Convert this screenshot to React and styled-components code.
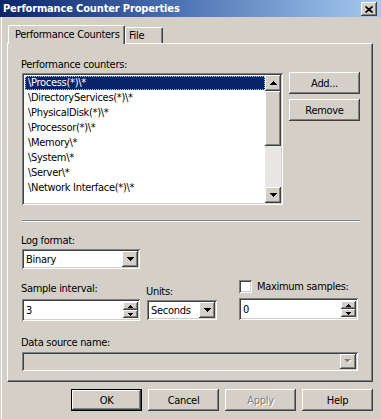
import React from 'react';
import styled, { createGlobalStyle, css } from 'styled-components';

const Global = createGlobalStyle`
  html, body { margin: 0; padding: 0; background: #d4d0c8; }
  body {
    font-family: "DejaVu Sans Condensed", "DejaVu Sans", "Liberation Sans", sans-serif;
    font-size: 11px;
    letter-spacing: -0.3px;
    color: #000;
  }
  * { box-sizing: border-box; }
`;

const bevelRaised = css`
  box-shadow: inset -1px -1px 0 #404040, inset 1px 1px 0 #ffffff,
    inset -2px -2px 0 #808080, inset 2px 2px 0 #d4d0c8;
`;

const bevelSunken = css`
  box-shadow: inset 1px 1px 0 #808080, inset -1px -1px 0 #ffffff,
    inset 2px 2px 0 #404040, inset -2px -2px 0 #d4d0c8;
`;

const Window = styled.div`
  width: 381px;
  height: 419px;
  background: #d4d0c8;
  display: flex;
  flex-direction: column;
  box-shadow: inset 1px 0 0 #d4d0c8, inset 2px 0 0 #ffffff;
  overflow: hidden;
`;

const TitleBar = styled.div`
  height: 17px;
  flex: none;
  display: flex;
  align-items: center;
  justify-content: space-between;
  padding: 0 4px 0 3px;
  background: linear-gradient(to right, #0a246a 0%, #4a6fb0 45%, #a6caf0 100%);
  color: #fff;
  font-weight: bold;
  font-size: 11px;
  letter-spacing: -0.15px;
`;

const CloseButton = styled.div`
  width: 16px;
  height: 14px;
  margin-top: 1px;
  background: #d4d0c8;
  ${bevelRaised};
  display: flex;
  align-items: center;
  justify-content: center;
`;

const Body = styled.div`
  flex: 1;
  padding: 8px 8px 0 7px;
  display: flex;
  flex-direction: column;
`;

const TabStrip = styled.div`
  height: 18px;
  display: flex;
  align-items: flex-end;
  padding-left: 1px;
`;

const Tab = styled.div`
  position: relative;
  z-index: ${p => (p.$active ? 2 : 1)};
  width: ${p => p.$w}px;
  height: ${p => (p.$active ? 19 : 16)}px;
  margin-bottom: ${p => (p.$active ? -1 : 0)}px;
  padding-left: ${p => (p.$active ? 6 : 3)}px;
  padding-bottom: ${p => (p.$active ? 1 : 0)}px;
  background: #d4d0c8;
  border-top: 1px solid #ffffff;
  border-left: 1px solid #ffffff;
  border-right: 1px solid #404040;
  border-radius: 2px 2px 0 0;
  box-shadow: inset -1px 0 0 #808080;
  display: flex;
  align-items: center;
  white-space: nowrap;
  overflow: hidden;
`;

const Panel = styled.div`
  width: 366px;
  height: 339px;
  flex: none;
  border-top: 1px solid #ffffff;
  border-left: 1px solid #ffffff;
  border-right: 1px solid #404040;
  border-bottom: 1px solid #404040;
  box-shadow: inset -1px -1px 0 #808080;
  padding: 14px 0 0 14px;
  display: flex;
  flex-direction: column;
`;

const Label = styled.div`
  height: 14px;
  line-height: 14px;
  margin-left: -1px;
  margin-top: ${p => p.$mt || 0}px;
  white-space: nowrap;
`;

const CounterRow = styled.div`
  display: flex;
  gap: 6px;
  align-items: flex-start;
`;

const ListBox = styled.div`
  width: 261px;
  height: 132px;
  margin-top: 1px;
  background: #ffffff;
  ${bevelSunken};
  padding: 2px;
  display: flex;
`;

const Items = styled.div`
  flex: 1;
  padding-left: 1px;
  overflow: hidden;
`;

const Item = styled.div`
  height: 14px;
  margin: 1px 0;
  line-height: 14px;
  padding-left: 3px;
  white-space: nowrap;
  background: ${p => (p.$selected ? '#0a246a' : 'transparent')};
  color: ${p => (p.$selected ? '#ffffff' : '#000000')};
  outline: ${p => (p.$selected ? '1px dotted #a6caf0' : 'none')};
  outline-offset: -1px;
`;

const ScrollBar = styled.div`
  width: 16px;
  display: flex;
  flex-direction: column;
`;

const ScrollBtn = styled.div`
  width: 16px;
  height: 16px;
  flex: none;
  background: #d4d0c8;
  ${bevelRaised};
  display: flex;
  align-items: center;
  justify-content: center;
`;

const Thumb = styled.div`
  height: 55px;
  flex: none;
  background: #d4d0c8;
  ${bevelRaised};
`;

const Track = styled.div`
  flex: 1;
  background: #e9e7e3;
`;

const SideButtons = styled.div`
  display: flex;
  flex-direction: column;
  gap: 5px;
`;

const Button = styled.div`
  width: 71px;
  height: 22px;
  background: #d4d0c8;
  display: flex;
  align-items: center;
  justify-content: center;
  ${bevelRaised};
  ${p =>
    p.$default &&
    css`
      border: 1px solid #000000;
    `}
  color: ${p => (p.$disabled ? '#808080' : '#000000')};
  text-shadow: ${p => (p.$disabled ? '1px 1px 0 #ffffff' : 'none')};
`;

const Separator = styled.div`
  width: 338px;
  height: 2px;
  margin-top: 15px;
  border-top: 1px solid #808080;
  border-bottom: 1px solid #ffffff;
`;

const Field = styled.div`
  width: ${p => p.$w}px;
  height: ${p => p.$h}px;
  margin-top: ${p => p.$mt || 0}px;
  background: ${p => (p.$disabled ? '#d4d0c8' : '#ffffff')};
  ${bevelSunken};
  padding: 2px;
  display: flex;
  align-items: stretch;
`;

const FieldText = styled.div`
  flex: 1;
  padding-left: 2px;
  display: flex;
  align-items: center;
  white-space: nowrap;
`;

const DropBtn = styled.div`
  width: 16px;
  flex: none;
  background: #d4d0c8;
  ${bevelRaised};
  display: flex;
  align-items: center;
  justify-content: center;
`;

const Spin = styled.div`
  width: 15px;
  flex: none;
  display: flex;
  flex-direction: column;
  margin: 1px 0;
`;

const SpinBtn = styled.div`
  flex: 1;
  background: #d4d0c8;
  ${bevelRaised};
  display: flex;
  align-items: center;
  justify-content: center;
`;

const SettingsRow = styled.div`
  display: flex;
  align-items: flex-start;
  margin-top: 11px;
`;

const Column = styled.div`
  display: flex;
  flex-direction: column;
  margin-right: ${p => p.$mr || 0}px;
`;

const CheckRow = styled.div`
  display: flex;
  align-items: center;
  gap: 5px;
  height: 13px;
`;

const CheckBox = styled.div`
  width: 13px;
  height: 13px;
  background: #ffffff;
  ${bevelSunken};
`;

const ButtonRow = styled.div`
  width: 366px;
  display: flex;
  justify-content: flex-end;
  gap: 6px;
  margin-top: 7px;
`;

const Arrow = ({ dir = 'down', color = '#000', small }) => {
  const w = small ? 5 : 7;
  const h = small ? 3 : 4;
  const pts = dir === 'down' ? `0,0 ${w},0 ${w / 2},${h}` : `0,${h} ${w},${h} ${w / 2},0`;
  return (
    <svg width={w} height={h} viewBox={`0 0 ${w} ${h}`} style={{ display: 'block' }}>
      <polygon points={pts} fill={color} shapeRendering="crispEdges" />
    </svg>
  );
};

const GreyArrow = () => (
  <svg width="8" height="5" viewBox="0 0 8 5" style={{ display: 'block' }}>
    <polygon points="1,1 8,1 4.5,4.5" fill="#ffffff" />
    <polygon points="0,0 7,0 3.5,3.5" fill="#808080" />
  </svg>
);

const counters = [
  '\\Process(*)\\*',
  '\\DirectoryServices(*)\\*',
  '\\PhysicalDisk(*)\\*',
  '\\Processor(*)\\*',
  '\\Memory\\*',
  '\\System\\*',
  '\\Server\\*',
  '\\Network Interface(*)\\*',
];

export default function App() {
  return (
    <>
      <Global />
      <Window>
        <TitleBar>
          <span>Performance Counter Properties</span>
          <CloseButton>
            <svg width="8" height="7" viewBox="0 0 8 7">
              <path d="M0.5 0.5 L7.5 6.5 M7.5 0.5 L0.5 6.5" stroke="#000" strokeWidth="1.8" />
            </svg>
          </CloseButton>
        </TitleBar>
        <Body>
          <TabStrip>
            <Tab $active $w={117}>Performance Counters</Tab>
            <Tab $w={38}>File</Tab>
          </TabStrip>
          <Panel>
            <Label>Performance counters:</Label>
            <CounterRow>
              <ListBox>
                <Items>
                  {counters.map((c, i) => (
                    <Item key={c} $selected={i === 0}>
                      {c}
                    </Item>
                  ))}
                </Items>
                <ScrollBar>
                  <ScrollBtn>
                    <Arrow dir="up" />
                  </ScrollBtn>
                  <Thumb />
                  <Track />
                  <ScrollBtn>
                    <Arrow dir="down" />
                  </ScrollBtn>
                </ScrollBar>
              </ListBox>
              <SideButtons>
                <Button>Add...</Button>
                <Button>Remove</Button>
              </SideButtons>
            </CounterRow>
            <Separator />
            <Label $mt={12}>Log format:</Label>
            <Field $w={118} $h={20} $mt={1}>
              <FieldText>Binary</FieldText>
              <DropBtn>
                <Arrow />
              </DropBtn>
            </Field>
            <SettingsRow>
              <Column $mr={7}>
                <Label $mt={2}>Sample interval:</Label>
                <Field $w={118} $h={22} $mt={3}>
                  <FieldText>3</FieldText>
                  <Spin>
                    <SpinBtn>
                      <Arrow dir="up" small />
                    </SpinBtn>
                    <SpinBtn>
                      <Arrow dir="down" small />
                    </SpinBtn>
                  </Spin>
                </Field>
              </Column>
              <Column $mr={22}>
                <Label $mt={5}>Units:</Label>
                <Field $w={70} $h={20} $mt={1}>
                  <FieldText>Seconds</FieldText>
                  <DropBtn>
                    <Arrow />
                  </DropBtn>
                </Field>
              </Column>
              <Column>
                <CheckRow>
                  <CheckBox />
                  <span>Maximum samples:</span>
                </CheckRow>
                <Field $w={119} $h={22} $mt={5}>
                  <FieldText>0</FieldText>
                  <Spin>
                    <SpinBtn>
                      <Arrow dir="up" small />
                    </SpinBtn>
                    <SpinBtn>
                      <Arrow dir="down" small />
                    </SpinBtn>
                  </Spin>
                </Field>
              </Column>
            </SettingsRow>
            <Label $mt={15}>Data source name:</Label>
            <Field $w={336} $h={19} $mt={2} $disabled>
              <FieldText />
              <DropBtn>
                <GreyArrow />
              </DropBtn>
            </Field>
          </Panel>
          <ButtonRow>
            <Button $default>OK</Button>
            <Button>Cancel</Button>
            <Button $disabled>Apply</Button>
            <Button>Help</Button>
          </ButtonRow>
        </Body>
      </Window>
    </>
  );
}
